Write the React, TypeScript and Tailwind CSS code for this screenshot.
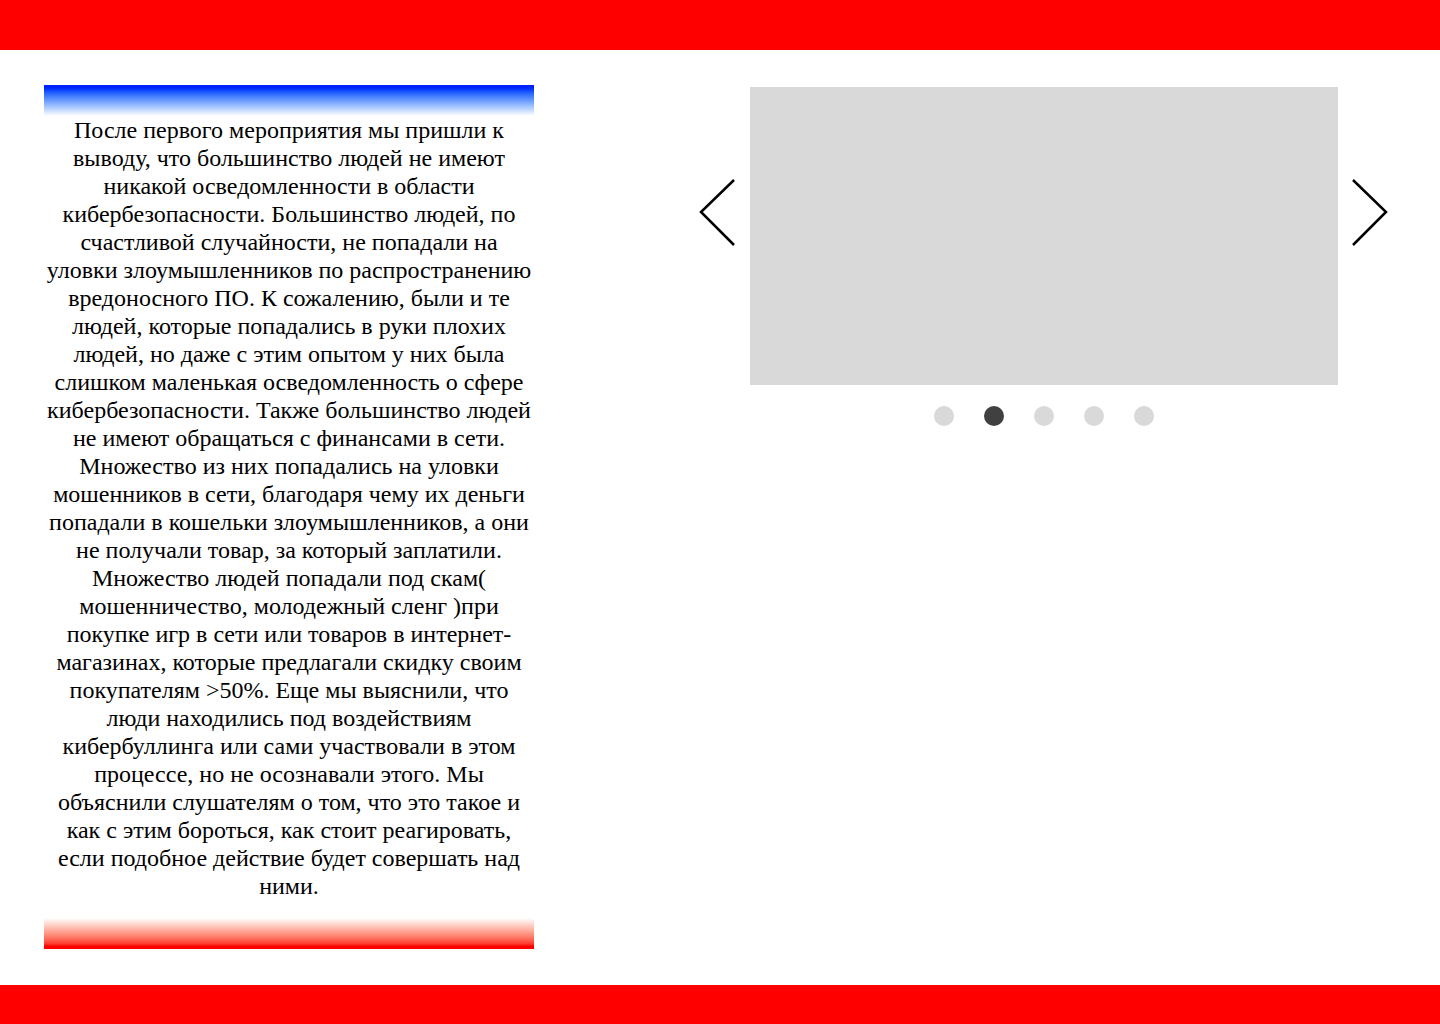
import * as React from 'react';

const text =
  'После первого мероприятия мы пришли к выводу, что большинство людей не имеют никакой осведомленности в области кибербезопасности. Большинство людей, по счастливой случайности, не попадали на уловки злоумышленников по распространению вредоносного ПО. К сожалению, были и те людей, которые попадались в руки плохих людей, но даже с этим опытом у них была слишком маленькая осведомленность о сфере кибербезопасности. Также большинство людей не имеют обращаться с финансами в сети. Множество из них попадались на уловки мошенников в сети, благодаря чему их деньги попадали в кошельки злоумышленников, а они не получали товар, за который заплатили. Множество людей попадали под скам( мошенничество, молодежный сленг )при покупке игр в сети или товаров в интернет-магазинах, которые предлагали скидку своим покупателям >50%. Еще мы выяснили, что люди находились под воздействиям кибербуллинга или сами участвовали в этом процессе, но не осознавали этого. Мы объяснили слушателям о том, что это такое и как с этим бороться, как стоит реагировать, если подобное действие будет совершать над ними.';

const Chevron = ({ dir }: { dir: 'left' | 'right' }) => (
  <svg width="38" height="68" viewBox="0 0 38 68" fill="none">
    <path
      d={dir === 'left' ? 'M35 1 L2 33 L35 66' : 'M3 1 L36 33 L3 66'}
      stroke="#000"
      strokeWidth="2.5"
    />
  </svg>
);

export default function App() {
  const [active, setActive] = React.useState(1);

  return (
    <div className="min-h-[1035px] flex flex-col bg-white" style={{ fontFamily: '"Liberation Serif", "Times New Roman", serif' }}>
      <header className="h-[50px] bg-[#ff0000]" />

      <main className="flex-1 flex pt-[35px]">
        <section className="ml-[44px] w-[490px] flex flex-col">
          <div className="h-[31px] bg-gradient-to-b from-[#0022ff] from-10% to-white" />
          <p className="text-[24px] leading-[28px] text-center text-black">{text}</p>
          <div className="mt-[18px] h-[31px] bg-gradient-to-b from-white to-[#ff0000] to-90%" />
        </section>

        <section className="ml-[165px] flex flex-col items-center">
          <div className="flex items-start">
            <button className="mt-[94px] mr-[13px]" onClick={() => setActive((active + 4) % 5)}>
              <Chevron dir="left" />
            </button>
            <div className="mt-[2px] w-[588px] h-[298px] bg-[#d9d9d9]" />
            <button className="mt-[94px] ml-[12px]" onClick={() => setActive((active + 1) % 5)}>
              <Chevron dir="right" />
            </button>
          </div>
          <div className="mt-[21px] flex gap-[30px]">
            {[0, 1, 2, 3, 4].map((i) => (
              <button
                key={i}
                onClick={() => setActive(i)}
                className={i === active ? 'w-5 h-5 rounded-full bg-[#404040]' : 'w-5 h-5 rounded-full bg-[#d9d9d9]'}
              />
            ))}
          </div>
        </section>
      </main>

      <footer className="h-[50px] bg-[#ff0000]" />
    </div>
  );
}
